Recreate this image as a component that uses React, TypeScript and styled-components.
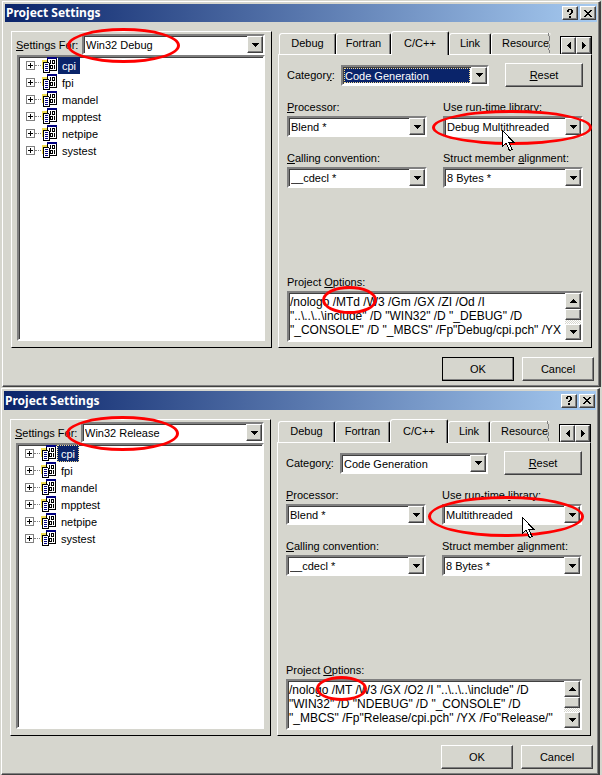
import React, { useId } from "react";
import styled, { createGlobalStyle, css } from "styled-components";

const face = "#d6d6ce";
const navy = "#0a246a";

const GlobalStyle = createGlobalStyle`
  *, *::before, *::after { box-sizing: border-box; }
  body {
    margin: 0;
    background: ${face};
    color: #000;
    font: 11px/14px "Liberation Sans", Arial, sans-serif;
  }
  button, select, textarea { font: inherit; color: inherit; margin: 0; border-radius: 0; }
`;

const raised = css`
  border: 1px solid;
  border-color: #fff #404040 #404040 #fff;
  box-shadow: inset -1px -1px 0 #808080;
  background: ${face};
`;

const sunken = css`
  border: 2px solid;
  border-color: #808080 #fff #fff #808080;
  box-shadow: inset 1px 1px 0 #404040;
  background: #fff;
`;

const Page = styled.main`
  display: flex;
  flex-direction: column;
  gap: 1px;
  padding: 1px 1px 0 2px;
`;

const Dialog = styled.section<{ $shifted?: boolean }>`
  ${raised}
  border-right-width: 2px;
  padding: 2px 2px 5px;
  margin: ${(p) => (p.$shifted ? "0 1px 0 -1px" : "0")};
`;

const TitleBar = styled.header<{ $tall?: boolean }>`
  display: flex;
  align-items: center;
  gap: 2px;
  height: ${(p) => (p.$tall ? 19 : 18)}px;
  padding-right: 1px;
  background: linear-gradient(90deg, ${navy}, #a6caf0);
`;

const Title = styled.h1`
  flex: 1;
  margin: 0;
  padding-left: 1px;
  color: #fff;
  font-family: "Noto Sans", "Liberation Sans", sans-serif;
  font-size: 12px;
  line-height: 16px;
`;

const CaptionButton = styled.button`
  ${raised}
  display: grid;
  place-items: center;
  width: 16px;
  height: 14px;
  padding: 0;
`;

const Body = styled.div`
  display: grid;
  grid-template-columns: 261fr 314fr;
  gap: 6px;
  padding: 9px 5px 0 6px;
`;

const LeftPane = styled.div`
  display: flex;
  flex-direction: column;
  min-width: 0;
  padding: 2px 6px 6px 4px;
  border: 1px solid;
  border-color: #fff #000 #000 #fff;
`;

const SettingsRow = styled.div`
  display: flex;
  align-items: center;
`;

const SettingsLabel = styled.label`
  flex: none;
  width: 66px;
  white-space: nowrap;
`;

const Combo = styled.div`
  ${sunken}
  position: relative;
  display: flex;
  flex: 1;
  min-width: 0;
  height: 21px;
`;

const Select = styled.select<{ $active?: boolean }>`
  appearance: none;
  flex: 1;
  min-width: 0;
  margin: 1px;
  padding: 1px 0 0;
  border: 1px ${(p) => (p.$active ? "dotted #f0d890" : "solid transparent")};
  outline: none;
  background: ${(p) => (p.$active ? navy : "transparent")};
  color: ${(p) => (p.$active ? "#fff" : "#000")};
  line-height: 12px;
`;

const ArrowBox = styled.span`
  ${raised}
  display: grid;
  place-items: center;
  flex: none;
  width: 16px;
`;

const Tree = styled.ul`
  ${sunken}
  flex: 1;
  margin: 0 0 0 1px;
  padding: 0 7px;
  list-style: none;
`;

const TreeRow = styled.li`
  display: flex;
  align-items: center;
  height: 17px;
`;

const Expander = styled.button`
  display: grid;
  place-items: center;
  width: 9px;
  height: 9px;
  padding: 0;
  border: 1px solid #808080;
  background: #fff;
`;

const Connector = styled.span`
  width: 6px;
  border-top: 1px dotted #808080;
`;

const TreeLabel = styled.span<{ $selected?: boolean; $focused?: boolean }>`
  height: 17px;
  margin-left: 1px;
  padding: 1px 3px;
  border: 1px ${(p) => (p.$focused ? "dotted #f0d890" : "solid transparent")};
  background: ${(p) => (p.$selected ? navy : "transparent")};
  color: ${(p) => (p.$selected ? "#fff" : "#000")};
  line-height: 14px;
`;

const RightPane = styled.div`
  display: flex;
  flex-direction: column;
  min-width: 0;
`;

const TabStrip = styled.div`
  display: flex;
  align-items: flex-end;
  height: 23px;
  padding-left: 1px;
`;

const Tab = styled.button<{ $width: number; $selected?: boolean; $cut?: boolean }>`
  flex: none;
  position: relative;
  width: ${(p) => p.$width}px;
  height: ${(p) => (p.$selected ? 24 : 21)}px;
  margin-bottom: ${(p) => (p.$selected ? -1 : 0)}px;
  padding: 0 0 2px ${(p) => (p.$cut ? 8 : 0)}px;
  border: 1px solid;
  border-color: #fff #000 transparent #fff;
  border-right-width: ${(p) => (p.$cut ? 0 : 1)}px;
  border-bottom-width: 0;
  border-radius: 3px 2px 0 0;
  box-shadow: ${(p) => (p.$cut ? "none" : "inset -1px 0 0 #808080")};
  background: ${face};
`;

const TornEdge = styled.svg`
  position: absolute;
  right: 0;
  top: -1px;
`;

const TabScroll = styled.div`
  display: flex;
  margin-left: auto;
  border: 1px solid #000;
  border-bottom: 0;
`;

const TabScrollButton = styled.button`
  ${raised}
  display: grid;
  place-items: center;
  width: 15px;
  height: 17px;
  padding: 0;
`;

const TabPanel = styled.div`
  flex: 1;
  padding: 8px 8px 5px;
  border: 1px solid;
  border-color: #fff #000 #000 #fff;
`;

const CategoryRow = styled.div`
  display: flex;
  align-items: center;
  height: 24px;
  margin-bottom: 13px;
`;

const CategoryLabel = styled.label`
  flex: none;
  width: 54px;
`;

const PushButton = styled.button<{ $default?: boolean }>`
  ${raised}
  width: 72px;
  height: 24px;
  padding: 0;
  outline: ${(p) => (p.$default ? "1px solid #000" : "none")};
  outline-offset: -1px;
`;

const ResetButton = styled(PushButton)`
  width: 78px;
  margin-left: 16px;
`;

const FieldGrid = styled.div`
  display: grid;
  grid-template-columns: 1fr 1fr;
  gap: 14px 16px;
  margin-bottom: 87px;
`;

const Field = styled.div`
  display: flex;
  flex-direction: column;
  gap: 2px;
  min-width: 0;
  label { white-space: nowrap; }
  ${Combo} { flex: none; }
`;

const OptionsFrame = styled.div`
  ${sunken}
  position: relative;
  display: flex;
  height: 51px;
`;

const OptionsText = styled.textarea`
  flex: 1;
  min-width: 0;
  padding: 2px 1px;
  border: 0;
  outline: none;
  resize: none;
  overflow: hidden;
  white-space: pre;
  background: transparent;
  font-size: 12px;
  line-height: 14px;
`;

const ScrollBar = styled.div`
  display: flex;
  flex-direction: column;
  width: 16px;
  background: repeating-conic-gradient(#fff 0 25%, ${face} 0 50%) 0 0 / 2px 2px;
`;

const ScrollButton = styled.button`
  ${raised}
  display: grid;
  place-items: center;
  height: 16px;
  padding: 0;
`;

const ScrollThumb = styled.span`
  ${raised}
  height: 11px;
  margin-bottom: auto;
`;

const Footer = styled.footer`
  display: flex;
  justify-content: flex-end;
  gap: 8px;
  padding: 9px 3px 0 0;
`;

type Box = { x: number; y: number; w: number; h: number };

const Ring = styled.span<{ $box: Box }>`
  position: absolute;
  z-index: 2;
  left: ${(p) => p.$box.x}px;
  top: ${(p) => p.$box.y}px;
  width: ${(p) => p.$box.w}px;
  height: ${(p) => p.$box.h}px;
  border: 3px solid #f00;
  border-radius: 50%;
  pointer-events: none;
`;

const Pointer = styled.svg<{ $x: number; $y: number }>`
  position: absolute;
  z-index: 3;
  left: ${(p) => p.$x}px;
  top: ${(p) => p.$y}px;
  pointer-events: none;
`;

const arrows = {
  down: { w: 7, h: 4, d: "M0 0h7v1h-7zM1 1h5v1h-5zM2 2h3v1h-3zM3 3h1v1h-1z" },
  up: { w: 7, h: 4, d: "M3 0h1v1h-1zM2 1h3v1h-3zM1 2h5v1h-5zM0 3h7v1h-7z" },
  left: { w: 4, h: 7, d: "M3 0h1v7h-1zM2 1h1v5h-1zM1 2h1v3h-1zM0 3h1v1h-1z" },
  right: { w: 4, h: 7, d: "M0 0h1v7h-1zM1 1h1v5h-1zM2 2h1v3h-1zM3 3h1v1h-1z" },
};

function Arrow({ to }: { to: keyof typeof arrows }) {
  const a = arrows[to];
  return (
    <svg width={a.w} height={a.h} shapeRendering="crispEdges" aria-hidden="true">
      <path d={a.d} />
    </svg>
  );
}

function ProjectIcon() {
  return (
    <svg width="16" height="17" viewBox="0 0 16 17" shapeRendering="crispEdges" aria-hidden="true">
      <path fill="#fff" d="M6 2h9v11H6z" />
      <path fill="#000080" d="M6 0h10v2H6z" />
      <path d="M15 2h1v12h-1zM6 2h1v3H6zM9 13h7v1H9z" />
      <path d="M9 3h1v4H9zM11 3h3v1h-3zM11 6h3v1h-3zM11 4h1v2h-1zM13 4h1v2h-1zM9 8h3v1H9zM9 11h3v1H9zM9 9h1v2H9zM11 9h1v2h-1zM13 8h1v4h-1z" />
      <path fill="#f0dc50" d="M1 3h5v2H1zM1 5h1v7H1z" />
      <path fill="#fff" d="M2 5h6v11H2z" />
      <path d="M2 5h6v1H2zM2 5h1v11H2zM2 15h6v1H2zM8 6h1v10H8z" />
      <path fill="#000080" d="M4 7h3v1H4zM4 9h3v1H4zM4 11h3v1H4zM4 13h3v1H4z" />
    </svg>
  );
}

function MousePointer({ x, y }: { x: number; y: number }) {
  return (
    <Pointer $x={x} $y={y} width="13" height="22" viewBox="0 0 13 22" shapeRendering="crispEdges" aria-hidden="true">
      <path d="M.5.5v16l3.5-3.5 3.5 7.5 2.5-1-3.5-7.5h5z" fill="#fff" stroke="#000" />
    </Pointer>
  );
}

function ComboBox(props: { id: string; value: string; active?: boolean; children?: React.ReactNode }) {
  return (
    <Combo>
      <Select id={props.id} $active={props.active} defaultValue={props.value}>
        <option>{props.value}</option>
      </Select>
      <ArrowBox aria-hidden="true">
        <Arrow to="down" />
      </ArrowBox>
      {props.children}
    </Combo>
  );
}

const tabs = [
  { name: "Debug", width: 57 },
  { name: "Fortran", width: 55 },
  { name: "C/C++", width: 58, selected: true },
  { name: "Link", width: 42 },
  { name: "Resource", width: 60, cut: true },
];

const projects = ["cpi", "fpi", "mandel", "mpptest", "netpipe", "systest"];

type Config = {
  name: string;
  library: string;
  options: string;
  second?: boolean;
  libraryRing: Box;
  optionsRing: Box;
  pointer: { x: number; y: number };
};

const configs: Config[] = [
  {
    name: "Win32 Debug",
    library: "Debug Multithreaded",
    options:
      '/nologo /MTd /W3 /Gm /GX /ZI /Od /I\n"..\\..\\..\\include" /D "WIN32" /D "_DEBUG" /D\n"_CONSOLE" /D "_MBCS" /Fp"Debug/cpi.pch" /YX',
    libraryRing: { x: -13, y: -8, w: 160, h: 35 },
    optionsRing: { x: 33, y: -7, w: 55, h: 28 },
    pointer: { x: 57, y: 12 },
  },
  {
    name: "Win32 Release",
    library: "Multithreaded",
    options:
      '/nologo /MT /W3 /GX /O2 /I "..\\..\\..\\include" /D\n"WIN32" /D "NDEBUG" /D "_CONSOLE" /D\n"_MBCS" /Fp"Release/cpi.pch" /YX /Fo"Release/"',
    second: true,
    libraryRing: { x: -16, y: -10, w: 156, h: 41 },
    optionsRing: { x: 28, y: -5, w: 51, h: 25 },
    pointer: { x: 78, y: 11 },
  },
];

function SettingsDialog({ config }: { config: Config }) {
  const id = useId();
  return (
    <Dialog $shifted={config.second} aria-labelledby={id + "title"}>
      <TitleBar $tall={config.second}>
        <Title id={id + "title"}>Project Settings</Title>
        <CaptionButton aria-label="Help">
          <svg width="6" height="9" shapeRendering="crispEdges" aria-hidden="true">
            <path d="M1 0h4v1H1zM0 1h2v2H0zM4 1h2v3H4zM3 4h2v1H3zM2 5h2v1H2zM2 7h2v2H2z" />
          </svg>
        </CaptionButton>
        <CaptionButton aria-label="Close">
          <svg width="8" height="7" shapeRendering="crispEdges" aria-hidden="true">
            <path d="M0 0h2v1H0zM6 0h2v1H6zM1 1h2v1H1zM5 1h2v1H5zM2 2h4v1H2zM3 3h2v1H3zM2 4h4v1H2zM1 5h2v1H1zM5 5h2v1H5zM0 6h2v1H0zM6 6h2v1H6z" />
          </svg>
        </CaptionButton>
      </TitleBar>
      <Body>
        <LeftPane>
          <SettingsRow>
            <SettingsLabel htmlFor={id + "for"}>
              <u>S</u>ettings For:
            </SettingsLabel>
            <ComboBox id={id + "for"} value={config.name}>
              <Ring $box={{ x: -17, y: -8, w: 113, h: 35 }} />
            </ComboBox>
          </SettingsRow>
          <Tree>
            {projects.map((name, i) => (
              <TreeRow key={name}>
                <Expander aria-label={"Expand " + name}>
                  <svg width="5" height="5" shapeRendering="crispEdges" aria-hidden="true">
                    <path d="M2 0h1v5H2zM0 2h5v1H0z" />
                  </svg>
                </Expander>
                <Connector />
                <ProjectIcon />
                <TreeLabel $selected={i === 0} $focused={i === 0 && config.second}>
                  {name}
                </TreeLabel>
              </TreeRow>
            ))}
          </Tree>
        </LeftPane>
        <RightPane>
          <TabStrip role="tablist">
            {tabs.map((t) => (
              <Tab key={t.name} role="tab" aria-selected={!!t.selected} $width={t.width} $selected={t.selected} $cut={t.cut}>
                {t.name}
                {t.cut && (
                  <TornEdge width="3" height="21" shapeRendering="crispEdges" aria-hidden="true">
                    <path d="M0 0h1v3H0zM1 3h1v5H1zM0 8h1v3H0zM1 11h1v4H1zM0 15h1v2H0zM1 17h1v3H1z" fill="#808080" />
                  </TornEdge>
                )}
              </Tab>
            ))}
            <TabScroll>
              <TabScrollButton aria-label="Previous tabs">
                <Arrow to="left" />
              </TabScrollButton>
              <TabScrollButton aria-label="More tabs">
                <Arrow to="right" />
              </TabScrollButton>
            </TabScroll>
          </TabStrip>
          <TabPanel role="tabpanel">
            <CategoryRow>
              <CategoryLabel htmlFor={id + "cat"}>
                Categor<u>y</u>:
              </CategoryLabel>
              <ComboBox id={id + "cat"} value="Code Generation" active={!config.second} />
              <ResetButton>
                <u>R</u>eset
              </ResetButton>
            </CategoryRow>
            <FieldGrid>
              <Field>
                <label htmlFor={id + "proc"}>
                  <u>P</u>rocessor:
                </label>
                <ComboBox id={id + "proc"} value="Blend *" />
              </Field>
              <Field>
                <label htmlFor={id + "lib"}>
                  Use run-time <u>l</u>ibrary:
                </label>
                <ComboBox id={id + "lib"} value={config.library}>
                  <Ring $box={config.libraryRing} />
                  <MousePointer {...config.pointer} />
                </ComboBox>
              </Field>
              <Field>
                <label htmlFor={id + "call"}>
                  <u>C</u>alling convention:
                </label>
                <ComboBox id={id + "call"} value="__cdecl *" />
              </Field>
              <Field>
                <label htmlFor={id + "align"}>
                  Struct member <u>a</u>lignment:
                </label>
                <ComboBox id={id + "align"} value="8 Bytes *" />
              </Field>
            </FieldGrid>
            <Field>
              <label htmlFor={id + "opt"}>
                Project <u>O</u>ptions:
              </label>
              <OptionsFrame>
                <OptionsText id={id + "opt"} defaultValue={config.options} spellCheck={false} />
                <ScrollBar>
                  <ScrollButton aria-label="Scroll up">
                    <Arrow to="up" />
                  </ScrollButton>
                  <ScrollThumb />
                  <ScrollButton aria-label="Scroll down">
                    <Arrow to="down" />
                  </ScrollButton>
                </ScrollBar>
                <Ring $box={config.optionsRing} />
              </OptionsFrame>
            </Field>
          </TabPanel>
        </RightPane>
      </Body>
      <Footer>
        <PushButton $default={!config.second}>OK</PushButton>
        <PushButton>Cancel</PushButton>
      </Footer>
    </Dialog>
  );
}

export default function App() {
  return (
    <>
      <GlobalStyle />
      <Page>
        {configs.map((c) => (
          <SettingsDialog key={c.name} config={c} />
        ))}
      </Page>
    </>
  );
}
